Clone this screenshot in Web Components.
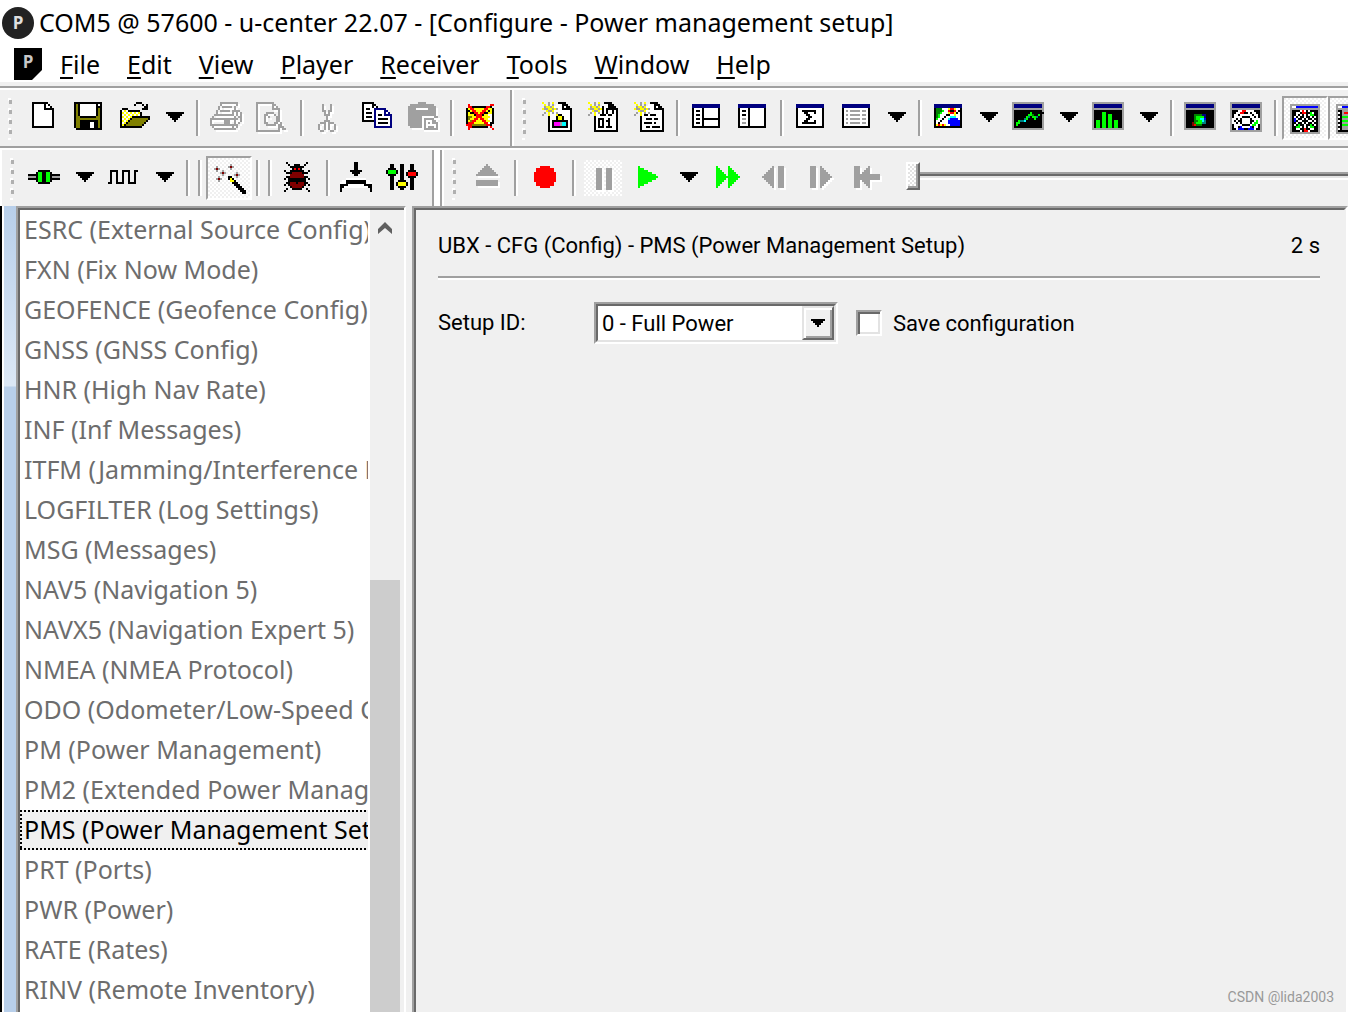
<!DOCTYPE html>
<html lang="en">
<head>
<meta charset="utf-8">
<title>u-center</title>
<style>
  html, body { margin: 0; height: 100%; overflow: hidden; background: #f0f0f0; }
</style>
</head>
<body>
<ucenter-app></ucenter-app>

<script>
const PALETTE = {
  K: '#000000', W: '#ffffff', G: '#a0a0a0', o: '#808000', y: '#ffff00', n: '#000080', R: '#ff0000',
  g: '#00ff00', d: '#008000', m: '#ff00ff', c: '#00ffff', b: '#0000ff', r: '#800000', t: '#008080'
};

// Toolbar bitmaps: one character per pixel, 16 columns by 15 rows.
const BITMAPS = {
  doc: `
...KKKKKKKK
...KWWWWWKWK
...KWWWWWKWWK
...KWWWWWKKKKK
...KWWWWWWWWWK
...KWWWWWWWWWK
...KWWWWWWWWWK
...KWWWWWWWWWK
...KWWWWWWWWWK
...KWWWWWWWWWK
...KWWWWWWWWWK
...KWWWWWWWWWK
...KKKKKKKKKKK`,
  save: `
.KKKKKKKKKKKKKK
.KoKWWWWWWWWKWK
.KoKWWWWWWWWKKK
.KoKWWWWWWWWKoK
.KoKWWWWWWWWKoK
.KoKWWWWWWWWKoK
.KoKWWWWWWWWKoK
.KooKKKKKKKKooK
.KooooooooooooK
.KooKKKKKKKKKoK
.KooKKKKKWWKKoK
.KooKKKKKWWKKoK
.KooKKKKKWWKKoK
..KKKKKKKKKKKKK`,
  open: `
.........KKK
........K...K.K
.............KK
..KKK.......KKK
.KWyWKKKKKK
.KyWyWyWyWyK
.KWyWyWyWyWK
.KyWyWyKKKKKKKKK
.KWyWyKooooooooK
.KyWyKooooooooK
.KWyKooooooooK
.KyKooooooooK
.KKKKKKKKKKK`,
  print: `
.....GGGGGGGGG
.....G.......G
....G.GGGGG.G
....G.......G
...G.GGGGG.GGGG
...G.......G.G.G
..GGGGGGGGGG.G.G
.G..........G.GG
GGGGGGGGGGGGGG.G
G......GGG..G..G
G......GGG..G.G
GGGGGGGGGGGGGG
.G.........G.G
..GGGGGGGGGGG`,
  preview: `
GGGGGGGGG
G.......GG
G.......G.G
G.......GGGG
G..........G
G....GGGG..G
G...GG...G.G
G...G.G...GG
G...G.....GG
G...G.....GG
G...GG...GG.G
G....GGGGG.GG
G..........GGG
G..........G.GG
GGGGGGGGGGGG..`,
  cut: `
.
....G...G
....G...G
....G...G
....GG.GG
.....G.G
.....GGG
......G
......G
.....GGG
...GGG.GGG
..G..G.G..G
..G..G.G..G
..G..G.G..G
...GG...GG`,
  copy: `
.KKKKKK
.KWWWWKK
.KWWWWKWK
.KWKKWWnnnnnn
.KWWWWWnWWWWnn
.KWKKKWnWWWWnWn
.KWWWWWnWKKWnnnn
.KWKKKWnWWWWWWWn
.KWWWWWnWKKKKKWn
.KKKKKKnWWWWWWWn
.......nWKKKKKWn
.......nWWWWWWWn
.......nnnnnnnnn`,
  paste: `
......GGGG
..GGGGGGGGGGGG
.GGGGGGGGGGGGGG
.GGGGWWWWWWGGGG
.GGGGGGGGGGGGGG
.GGGGGGGGGGGGGG
.GGGGGGGGGGGGGG
.GGGGGGGWWWWWWGG
.GGGGGGGWGGGGGW
.GGGGGGGWGWWWGGW
.GGGGGGGWGWGWGGG
.GGGGGGGWGWWWWWG
..GGGGGGWGWGGGWG
........WGGGGGGG`,
  erase: `
.
..R..........RR
..RRKKKKKKKRRK
.KyRRyyyyyRRyyK
.KKyRRyyyRRyKyK
.KyKKRRyRRKKyyK
.KyyyKRRRKyyWWK
.KooyyRRRyyyyWK
.KoyyRRyRRyyWWK
.KyoRRyyyRRyyWK
.KRRRyyyyyRRWKK
.RRRoooooooRRK
..RRKKKKKKKK.R
..R...........R`,
  newPacket: `
.y..G.y..KKKK
..y.G.G.WWWKKK
..GyyGyWWWWKWKK
.yGGyyGyGWWKKKKK
...yGGyWWWWWWWWK
..G.yWGWGWWWWWWK
.G..yWWWyKKWWWWK
....KWWWKyyKWWWK
....KWWWKyyKWWWK
....KWKKKKKKKKWK
....KWKmmmGccKWK
....KWKmmmGccKWK
....KWKKKKKKKKWK
....KWWWWWWWWWWK
....KKKKKKKKKKKK`,
  newBinary: `
.y..G.y..KKKK
..y.G.G.WWWKKK
..GyyGyWKWWKKKK
.yGGyyGyKWKKKKKK
...yGGyWKWKWWKWK
..G.yWGWKWKWWKWK
.G..yWWKKKWKKWWK
....KWWWWWWWWWWK
....KWKKKWWKWWWK
....KWKWKWKKWWWK
....KWKWKWWKWWWK
....KWKWKWWKWWWK
....KWKKKWKKKWWK
....KWWWWWWWWWWK
....KKKKKKKKKKKK`,
  newText: `
.y..G.y..KKKK
..y.G.G.WWWKKK
..GyyGyWWWWKWKK
.yGGyyGyGWWKKKKK
...yGGyWWWWWWWWK
..G.yWGWGWWWWWWK
.G..yWKKWKKKWWWK
....KWWWWWWWWWWK
....KWWKKKWKKWWK
....KWWWWWWWWWWK
....KWKKKKWKWWWK
....KWWWWWWWWWWK
....KWWKKWKKKKWK
....KWWWWWWWWWWK
....KKKKKKKKKKKK`,
  split: `
.
.nnnnnnnnnnnnnn
.nnnnnnnnnnnnnn
.KWWWWKWWWWWWWK
.KWKKWKWWWWWWWK
.KWWWWKWWWWWWWK
.KWKKWKWWWWWWWK
.KWWWWKWWWWWWWK
.KWKKWKKKKKKKKK
.KWWWWKWWWWWWWK
.KWKKWKWWWWWWWK
.KWWWWKWWWWWWWK
.KKKKKKKKKKKKKK`,
  side: `
.
.nnnnnnnnnnnnnn
.nnnnnnnnnnnnnn
.KWWWWKWWWWWWWK
.KWKKWKWWWWWWWK
.KWWWWKWWWWWWWK
.KWKKWKWWWWWWWK
.KWWWWKWWWWWWWK
.KWGGWKWWWWWWWK
.KWWWWKWWWWWWWK
.KWGGWKWWWWWWWK
.KWWWWKWWWWWWWK
.KKKKKKKKKKKKKK`,
  sigma: `
.
.nnnnnnnnnnnnnn
.nnnnnnnnnnnnnn
.KWWWWWWWWWWWWK
.KWWKKKKKKKWWWK
.KWWWKKWWWKWWWK
.KWWWWKKWWWWWWK
.KWWWWWKKWWWWWK
.KWWWWKKWWWWWWK
.KWWWKKWWWKWWWK
.KWWKKKKKKKWWWK
.KWWWWWWWWWWWWK
.KKKKKKKKKKKKKK`,
  list: `
.
.nnnnnnnnnnnnnn
.nnnnnnnnnnnnnn
.KWWWWWWWWWWWWK
.KWGWGGGGGWGGWK
.KWWWWWWWWWWWWK
.KWGWGGGGGWGGWK
.KWWWWWWWWWWWWK
.KWGWGGGGGWGGWK
.KWWWWWWWWWWWWK
.KWGWGGGGGWGGWK
.KWWWWWWWWWWWWK
.KKKKKKKKKKKKKK`,
  map: `
.
.nnnnnnnnnnnnnn
.nnnnnnnnnnnnnn
.KdddWWWyRRyWWK
.KdddgWWRKKRWKK
.KddgWWWyRRyKWK
.KdgWWWKKWWyWWK
.KdgWWKWWcccWWK
.KgWWKWWcbbbbWK
.KWWKWWWbbbbbbK
.KWKWWWWbbbbbbK
.KyRyRyWWbbbbbK
.KKKKKKKKKKKKKK`,
  chart: `
GGGGGGGGGGGGGGGG
GnnnnnnnnnnnnnnG
GnnnnnnnnnnnnnnG
GGGGGGGGGGGGGGGG
GKKKKKKKKKKKKKKG
GKKKKKKKKgKKKKKK
GKKKKKKKggdKKgKG
GKKKKKKgtKggtKKG
GKKKKKtgKKKgKKKG
GKKgttcKKKKKKKKG
GKggKKKKKKKKKKKG
GKgKKKKKKKKKKKKG
GKKKKKKKKKKKKKKG
GGGGGGGGGGGGGGGG`,
  bars: `
GGGGGGGGGGGGGGGG
GnnnnnnnnnnnnnnG
GnnnnnnnnnnnnnnG
GGGGGGGGGGGGGGGG
GKKKKKKKKKKKKKKG
GKKKKggKKKKKKKKG
GKKKKggKggKKKKKG
GKKKKggKggKKKKKG
GKKKKggKggKKKKKG
GKggKggKggKggKKG
GKggKggKggKggKKG
GKggKggKggKggKKG
GKggKggKggKggKKG
GGGGGGGGGGGGGGGG`,
  scatter: `
GGGGGGGGGGGGGGGG
GnnnnnnnnnnnnnnG
GnnnnnnnnnnnnnnG
GGGGGGGGGGGGGGGG
GKKKKKKKKKKKKKKG
GKKKKKKKKKKKKKKG
GKKKKddddnnKKKKG
GKKKKdggggnKKKKG
GKKKKdggccbKKKKG
GKKKKddggctKKKKG
GKKKrdgggttKKKKG
GKKKrRdddKKKKKKG
GKKKKKKKKKKKKKKG
GGGGGGGGGGGGGGGG`,
  sky: `
GGGGGGGGGGGGGGGG
GnnnnnnnnnnnnnnG
GnnnnnnnnnnnnnnG
GGGGGGGGGGGGGGGG
GKKKWWRRWWWWKKKG
GKKWWRRKKWKWWKKG
GKWWKWWWWWWKWWKG
GKWWWWKKKKWWKWKG
GWWKWKWWWWKWWWWG
GWKWKKWWWWKKWgWG
GWWKWKWWWWKWggWG
GKWWWWKKKKWggWKG
GKWWKbWWWWbKWWKG
GKKWbbbKKbbbWKKG
GGGGGGGGGGGGGGGG`,
  skyLive: `
GGGGGGGGGGGGGGG
GWWbbbbbbbbbbbG
GGGGGGGGGGGGGGG
GKKKKWRWKWKKKKG
GKKWWKRRKKgWKKG
GKKWKWKWKWggKKG
GKWKWKKWKKWKWKG
GKbWKKWKWKKWKKG
GKbKWWKKKWWKWKG
GKKWKKWKWKKWKKG
GKWKgKKWKKgKWKG
GKKggWKWKWggKKG
GKKWWKKRKKWWKKG
GKKKKWKRRWKKKKG
GGGGGGGGGGGGGGG`,
  tableLive: `
GGGGGGGGGGGGGGG
GWWbbbbbbbbbbbG
GGGGGGGGGGGGGGG
GKKGGGGGGGGGGKG
GWKGRRGRGGGGGWG
GKKGGGGGGGGGGKG
GWKgggGgggGggWG
GKKGGGGGGGGGGKG
GWKgggGgggGggWG
GKKGGGGGGGGGGKG
GWKgggGgggGggWG
GKKGGGGGGGGGGKG
GWKGGGGGGGGGGWG
GKKKKKKKKKKKKKG
GGGGGGGGGGGGGGG`,
  connect: `
.
.
.
.
.....KKKKKK
....KggKKggK
KKKKKggKKggKKKKK
GGGGKggKKggKGGGG
KKKKKggKKggKKKKK
....KggKKggK
.....KKKKKK`,
  wave: `
.
.
.
.
.KKKK..KKKK..KK
.K..K..K..K..K
.K..K..K..K..K
.K..K..K..K..K
.K..K..K..K..K
.K..K..K..K..K
KK..KKKK..KKKK`,
  wand: `
........G
.G.....GrG
GrG.....G
.G..G
...GrG.....G
....G.....GrG
..G....KK..G
.GrG...KyK
..G.....yyK
.........KKK
..........KKK
...........KKK
............KKK
.............KKK
..............KK`,
  bug: `
..K.........K
...K..KKK..K
....KKKKKKK
.....KRKRK
.K..KKKKKKK..K
..KKKrrrrrKKK
....rrrrrrr
..KKrrrrrrrKK
.K.KKKKKKKKK.K
...KKKKKKKKK
..KKrrrKrrrKK
.K.KrrrrrrrK.K
....KrrrrrK
..K..KKKKK..K
.K...........K`,
  receive: `
.......KK
.......KK
.......KK
.......KK
.....KKKKKK
......KKKK
.......KK
.
...WWWWWWWWWW
.WWKKKKKKKKKKWW
WWWKKKKKKKKKKWWW
KKKKWWWWWWWWKKKK
KKWWWWWWWWWWWWKK
K..............K
K..............K`,
  sliders: `
.
..KK...KK...KK
..KK...KK...KK
.KKKK..KK...KK
KggggK.KK..KKKK
KggggK.KK.KRRRRK
.KKKK..KK.KRRRRK
..KK...KK..KKKK
..KK...KK...KK
..KK..KKKK..KK
..KK.KyyyyK.KK
..KK.KyyyyK.KK
..KK..KKKK..KK
..KK...KK...KK`,
  eject: `
.
........G
.......GGG
......GGGGG
.....GGGGGGG
....GGGGGGGGG
...GGGGGGGGGGG
.
.
...GGGGGGGGGGG
...GGGGGGGGGGG
...GGGGGGGGGGG`,
  record: `
.
.
......RRRRR
....RRRRRRRRR
....RRRRRRRRR
...RRRRRRRRRRR
...RRRRRRRRRRR
...RRRRRRRRRRR
...RRRRRRRRRRR
...RRRRRRRRRRR
....RRRRRRRRR
....RRRRRRRRR
......RRRRR`,
  pause: `
.
.
.
.....GGG..GGG
.....GGG..GGG
.....GGG..GGG
.....GGG..GGG
.....GGG..GGG
.....GGG..GGG
.....GGG..GGG
.....GGG..GGG
.....GGG..GGG
.....GGG..GGG
.....GGG..GGG`,
  play: `
.
.
...g
...ggg
...ggggg
...ggggggg
...ggggggggg
...gggggggggg
...ggggggggg
...ggggggg
...ggggg
...ggg
...g`,
  forward: `
.
.
..g.....g
..gg....gg
..ggg...ggg
..gggg..gggg
..ggggg.ggggg
..gggggggggggg
..ggggg.ggggg
..gggg..gggg
..ggg...ggg
..gg....gg
..g.....g`,
  stepBack: `
.
.
.......G..GGG
......GG..GGG
.....GGG..GGG
....GGGG..GGG
...GGGGG..GGG
..GGGGGG..GGG
...GGGGG..GGG
....GGGG..GGG
.....GGG..GGG
......GG..GGG
.......G..GGG`,
  stepForward: `
.
.
...GGG..G
...GGG..GG
...GGG..GGG
...GGG..GGGG
...GGG..GGGGG
...GGG..GGGGGG
...GGG..GGGGG
...GGG..GGGG
...GGG..GGG
...GGG..GG
...GGG..G`,
  rewind: `
.
.
..GGG....G
..GGG...GG
..GGG..GGG
..GGG.GGGG
..GGGGGGGGGGGGG
..GGGGGGGGGGGGG
..GGGGGGGGGGGGG
..GGG.GGGG
..GGG..GGG
..GGG...GG
..GGG....G`
};

function bitmapPaths(name, shift, forced) {
  const runs = {};
  BITMAPS[name].slice(1).split('\n').forEach((line, y) => {
    for (const m of line.matchAll(/([A-Za-z])\1*/g)) {
      const colour = forced || PALETTE[m[1]];
      (runs[colour] ||= []).push(`M${m.index + shift} ${y + shift}h${m[0].length}v1h-${m[0].length}z`);
    }
  });
  return Object.entries(runs).map(([c, d]) => `<path fill="${c}" d="${d.join('')}"/>`).join('');
}

function define(tag, html, setup) {
  const template = document.createElement('template');
  template.innerHTML = html;
  customElements.define(tag, class extends HTMLElement {
    constructor() {
      super();
      this.attachShadow({ mode: 'open' }).append(template.content.cloneNode(true));
    }
    connectedCallback() { if (setup) setup(this, this.shadowRoot); }
  });
}

define('pixel-icon', `
<style>
  :host { display: block; flex: none; width: 32px; height: 30px; }
  svg { display: block; overflow: visible; }
</style>
<svg width="32" height="30" viewBox="0 0 16 15" shape-rendering="crispEdges" aria-hidden="true"></svg>`,
(host, root) => {
  const name = host.getAttribute('name');
  root.querySelector('svg').innerHTML =
    (host.hasAttribute('embossed') ? bitmapPaths(name, 1, '#ffffff') : '') + bitmapPaths(name, 0);
});

define('tool-button', `
<style>
  :host { display: block; flex: none; }
  button { display: flex; align-items: flex-start; box-sizing: border-box; width: 46px; height: 44px; margin: 0; padding: 4px; border: 2px solid transparent; border-radius: 0; background: none; }
  :host([pressed]) button { border-color: #a0a0a0 #fff #fff #a0a0a0; padding: 6px 2px 2px 6px;
    background: repeating-conic-gradient(#fff 0 25%, #f0f0f0 0 50%) 0 0 / 4px 4px padding-box; }
  :host([held]) button { border-width: 4px; padding: 2px;
    background: repeating-conic-gradient(#fff 0 25%, #f0f0f0 0 50%) 0 0 / 4px 4px padding-box; }
</style>
<button type="button"></button>`,
(host, root) => {
  const button = root.querySelector('button');
  const icon = document.createElement('pixel-icon');
  icon.setAttribute('name', host.getAttribute('icon'));
  button.disabled = host.hasAttribute('disabled');
  icon.toggleAttribute('embossed', button.disabled);
  button.setAttribute('aria-label', host.getAttribute('label') || host.getAttribute('icon'));
  button.replaceChildren(icon);
});

define('drop-arrow', `
<style>
  :host { display: block; flex: none; }
  button { display: flex; align-items: flex-start; box-sizing: border-box; width: 34px; height: 44px; margin: 0; padding: 16px 8px 0; border: 0; background: none; }
  svg { display: block; }
</style>
<button type="button" aria-label="More"><svg width="18" height="10" viewBox="0 0 9 5" shape-rendering="crispEdges"><path d="M0 0h9v1h-1v1h-1v1h-1v1h-1v1h-1v-1h-1v-1h-1v-1h-1v-1h-1z"/></svg></button>`);

define('tool-gap', `
<style>
  :host { display: flex; flex: none; width: 12px; height: 44px; justify-content: center; align-items: center; }
  i { width: 2px; height: 36px; background: #a0a0a0; border-right: 2px solid #fff; }
</style>
<i></i>`);

define('tool-band', `
<style>
  :host { display: flex; flex: none; align-items: center; }
  :host([grow]) { flex: 1; min-width: 0; }
  .grip { flex: none; width: 20px; height: 44px; }
  .grip svg { display: block; margin: 2px 0 0 8px; }
</style>
<div class="grip"><svg width="4" height="42" shape-rendering="crispEdges" aria-hidden="true">
  <g fill="#fff"><path d="M0 0h3v3h-3zM0 10h3v3h-3zM0 20h3v3h-3zM0 30h3v3h-3zM0 40h3v2h-3z"/></g>
  <g fill="#b0b0b0"><path d="M1 2h3v4h-3zM1 12h3v4h-3zM1 22h3v4h-3zM1 32h3v4h-3z"/></g>
</svg></div>
<slot></slot>`);

define('tool-row', `
<style>
  :host { display: flex; flex: none; height: 56px; overflow: hidden; border-top: 2px solid #fff; border-bottom: 2px solid #a0a0a0; background: #f0f0f0; }
  ::slotted(hr) { flex: none; width: 2px; height: 100%; margin: 0 0 0 6px; border: 0; border-right: 2px solid #fff; background: #a0a0a0; }
  ::slotted(hr.wide) { width: 6px; border: 0; border-left: 2px solid #a0a0a0; background: #fff; }
  ::slotted(hr.next) { margin: 0; }
  :host([inset]) { box-shadow: inset 2px 0 #fff; padding-left: 2px; }
</style>
<slot></slot>`);

define('seek-slider', `
<style>
  :host { display: block; flex: 1; min-width: 100px; padding: 0 0 4px 16px; }
  input { display: block; width: 100%; height: 28px; margin: 0; appearance: none; background: none; }
  input::-webkit-slider-runnable-track { height: 8px;
    background: linear-gradient(#a0a0a0 0 2px, #696969 2px 4px, #e3e3e3 4px 6px, #fff 6px); }
  input::-webkit-slider-thumb { appearance: none; box-sizing: border-box; width: 14px; height: 28px; margin-top: -10px;
    border: 2px solid; border-color: #fff #696969 #696969 #fff; box-shadow: inset -2px -2px #a0a0a0;
    background: repeating-conic-gradient(#fff 0 25%, #e3e3e3 0 50%) 0 0 / 4px 4px padding-box; }
</style>
<input type="range" min="0" max="100" value="0" aria-label="Playback position">`);

define('app-badge', `
<style>
  :host { display: flex; flex: none; align-items: center; justify-content: center; width: 32px; height: 32px; border-radius: 16px;
    background: #222; color: #e0e0e0; font: bold 17px/32px "Open Sans", sans-serif; }
  :host([square]) { width: 28px; border-radius: 0; background: #000; color: #c8c8c8; clip-path: polygon(0 0, 28px 0, 28px 22px, 18px 32px, 0 32px); line-height: 28px; align-items: flex-start; }
</style>
<slot></slot>`);

define('title-bar', `
<style>
  :host { display: flex; flex: none; align-items: center; gap: 5px; height: 46px; padding-left: 2px; background: #fff; color: #000; font: 25px/44px "Noto Sans", sans-serif; }
  h1 { margin: 0; height: 46px; font: inherit; white-space: nowrap; }
</style>
<app-badge>P</app-badge><h1><slot></slot></h1>`);

define('menu-entry', `
<style>
  button { display: block; margin: 0; padding: 0; border: 0; background: none; color: #000; font: inherit; }
  u { text-decoration-thickness: 2px; text-underline-offset: 3px; }
</style>
<button type="button"><u></u><span></span></button>`,
(host, root) => {
  const label = host.getAttribute('label');
  root.querySelector('u').textContent = label[0];
  root.querySelector('span').textContent = label.slice(1);
});

define('menu-bar', `
<style>
  :host { display: block; flex: none; background: #fff; border-bottom: 2px solid #a0a0a0; }
  nav { display: flex; align-items: center; gap: 27px; height: 36px; padding: 0 14px; border-bottom: 4px solid #f0f0f0; font: 25px/36px "Noto Sans", sans-serif; }
  app-badge { margin-right: -9px; }
</style>
<nav><app-badge square>P</app-badge><slot></slot></nav>`);

define('message-item', `
<style>
  :host { display: block; height: 40px; padding-left: 4px; overflow: hidden; white-space: nowrap; color: #6d6d6d; }
  :host([aria-selected="true"]) { color: #000;
    background:
      repeating-linear-gradient(90deg, #000 0 2px, #f0f0f0 2px 4px) 0 0 / 100% 2px no-repeat,
      repeating-linear-gradient(90deg, #000 0 2px, #f0f0f0 2px 4px) 0 100% / 100% 2px no-repeat,
      repeating-linear-gradient(#000 0 2px, #f0f0f0 2px 4px) 0 0 / 2px 100% no-repeat,
      #f0f0f0; }
</style>
<slot></slot>`);

define('message-list', `
<style>
  :host { display: flex; flex: none; min-height: 0; box-sizing: border-box; border: 2px solid #a0a0a0; border-right-color: #fff; border-bottom: 0; background: #f0f0f0; }
  .well { display: flex; flex: 1; min-width: 0; border-top: 2px solid #696969; border-left: 2px solid #696969; background: #fff; }
  .rows { flex: 1; min-width: 0; overflow: hidden; margin-right: 2px; font: 25px/38px "Noto Sans", sans-serif; }
  .bar { display: flex; flex-direction: column; flex: none; width: 30px; padding-right: 4px; background: #f0f0f0; }
  .bar svg { flex: none; display: block; margin: 12px 0 0 7px; }
  .thumb { flex: 1; margin-top: 346px; background: #cdcdcd; }
</style>
<div class="well">
  <div class="rows" role="listbox" aria-label="Messages"><slot></slot></div>
  <div class="bar">
    <svg width="16" height="12" viewBox="0 0 16 12" aria-hidden="true"><path d="M1 12v-5l7-7 7 7v5l-7-6z" fill="#606060"/></svg>
    <div class="thumb"></div>
  </div>
</div>`);

define('classic-select', `
<style>
  :host { display: block; box-sizing: border-box; width: 244px; border: 2px solid; border-color: #a0a0a0 #fff #fff #a0a0a0; }
  .box { display: grid; height: 34px; border: 2px solid; border-color: #696969 #e3e3e3 #e3e3e3 #696969; background: #fff; }
  select, .drop { grid-area: 1 / 1; }
  select { appearance: none; width: 100%; height: 34px; margin: 0; padding: 2px 36px 0 4px; border: 0; border-radius: 0; background: none; color: #000; font: inherit; outline: 0; }
  .drop { display: flex; align-items: center; justify-content: center; justify-self: end; box-sizing: border-box; width: 32px; height: 34px; pointer-events: none;
    background: #f0f0f0; border: 2px solid; border-color: #e3e3e3 #696969 #696969 #e3e3e3; box-shadow: inset 2px 2px #fff, inset -2px -2px #a0a0a0; }
</style>
<div class="box">
  <select aria-label="Setup ID">
    <option>0 - Full Power</option><option>1 - Balanced</option><option>2 - Interval</option>
  </select>
  <span class="drop"><svg width="14" height="8" viewBox="0 0 7 4" shape-rendering="crispEdges"><path d="M0 0h7v1h-1v1h-1v1h-1v1h-1v-1h-1v-1h-1v-1h-1z"/></svg></span>
</div>`);

define('classic-check', `
<style>
  label { display: flex; align-items: center; gap: 11px; white-space: nowrap; }
  span { padding-top: 2px; }
  input { appearance: none; flex: none; box-sizing: border-box; width: 26px; height: 26px; margin: 0; border: 2px solid; border-color: #a0a0a0 #fff #fff #a0a0a0; background: #fff;
    box-shadow: inset 2px 2px #696969, inset -2px -2px #e3e3e3; }
</style>
<label><input type="checkbox"><span><slot></slot></span></label>`);

define('config-panel', `
<style>
  :host { display: block; flex: 1; min-width: 0; border: 2px solid #a0a0a0; border-right-color: #fff; border-bottom: 0; background: #f0f0f0; color: #000; font: 22px/28px Roboto, "Liberation Sans", sans-serif; }
  .well { position: relative; box-sizing: border-box; height: 100%; padding: 22px 24px 0 22px; border: 2px solid #696969; border-right-color: #f0f0f0; border-bottom: 0; }
  header { display: flex; justify-content: space-between; padding-bottom: 16px; border-bottom: 2px solid #a0a0a0; box-shadow: 0 2px #fff; white-space: nowrap; }
  h2 { margin: 0; font: inherit; }
  .line { display: flex; align-items: center; margin-top: 24px; }
  .name { width: 156px; }
  classic-check { margin-left: 18px; }
  small { position: absolute; right: 10px; bottom: 6px; color: #999; font: 14px/18px Roboto, "Liberation Sans", sans-serif; }
</style>
<div class="well">
  <header><h2>UBX - CFG (Config) - PMS (Power Management Setup)</h2><span>2 s</span></header>
  <div class="line"><span class="name">Setup ID:</span><classic-select></classic-select><classic-check>Save configuration</classic-check></div>
  <small>CSDN @lida2003</small>
</div>`);

define('ucenter-app', `
<style>
  :host { display: flex; flex-direction: column; height: 100vh; background: #f0f0f0; }
  tool-row.last { border-bottom: 0; }
  main { display: flex; flex: 1; min-height: 0; }
  .edge { flex: none; box-sizing: border-box; width: 16px; border-left: 2px solid #000; box-shadow: inset 2px 0 #fff;
    background: linear-gradient(#b8cfea, #dbe7f5 176px, #dbe7f5 180px, #b8cfea 181px); }
  message-list { width: 390px; }
  config-panel { margin-left: 6px; }
</style>
<title-bar>COM5 @ 57600 - u-center 22.07 - [Configure - Power management setup]</title-bar>
<menu-bar>
  <menu-entry label="File"></menu-entry><menu-entry label="Edit"></menu-entry><menu-entry label="View"></menu-entry>
  <menu-entry label="Player"></menu-entry><menu-entry label="Receiver"></menu-entry><menu-entry label="Tools"></menu-entry>
  <menu-entry label="Window"></menu-entry><menu-entry label="Help"></menu-entry>
</menu-bar>
<tool-row>
  <tool-band>
    <tool-button icon="doc" label="New"></tool-button><tool-button icon="save" label="Save"></tool-button><tool-button icon="open" label="Open"></tool-button><drop-arrow></drop-arrow>
    <tool-gap></tool-gap>
    <tool-button icon="print" disabled></tool-button><tool-button icon="preview" disabled></tool-button>
    <tool-gap></tool-gap>
    <tool-button icon="cut" disabled></tool-button><tool-button icon="copy"></tool-button><tool-button icon="paste" disabled></tool-button>
    <tool-gap></tool-gap>
    <tool-button icon="erase"></tool-button>
  </tool-band>
  <hr>
  <tool-band>
    <tool-button icon="newPacket"></tool-button><tool-button icon="newBinary"></tool-button><tool-button icon="newText"></tool-button>
    <tool-gap></tool-gap>
    <tool-button icon="split"></tool-button><tool-button icon="side"></tool-button>
    <tool-gap></tool-gap>
    <tool-button icon="sigma"></tool-button><tool-button icon="list"></tool-button><drop-arrow></drop-arrow>
    <tool-gap></tool-gap>
    <tool-button icon="map"></tool-button><drop-arrow></drop-arrow><tool-button icon="chart"></tool-button><drop-arrow></drop-arrow><tool-button icon="bars"></tool-button><drop-arrow></drop-arrow>
    <tool-gap></tool-gap>
    <tool-button icon="scatter"></tool-button><tool-button icon="sky"></tool-button>
    <tool-gap></tool-gap>
    <tool-button icon="skyLive" pressed></tool-button><tool-button icon="tableLive" pressed></tool-button>
  </tool-band>
</tool-row>
<tool-row class="last" inset>
  <tool-band>
    <tool-button icon="connect"></tool-button><drop-arrow></drop-arrow><tool-button icon="wave"></tool-button><drop-arrow></drop-arrow>
    <tool-gap></tool-gap><tool-gap></tool-gap>
    <tool-button icon="wand" pressed></tool-button>
    <tool-gap></tool-gap><tool-gap></tool-gap>
    <tool-button icon="bug"></tool-button>
    <tool-gap></tool-gap>
    <tool-button icon="receive"></tool-button><tool-button icon="sliders"></tool-button>
  </tool-band>
  <hr class="wide"><hr class="next">
  <tool-band grow>
    <tool-button icon="eject" disabled></tool-button>
    <tool-gap></tool-gap>
    <tool-button icon="record"></tool-button>
    <tool-gap></tool-gap>
    <tool-button icon="pause" disabled held></tool-button><tool-button icon="play"></tool-button><drop-arrow></drop-arrow><tool-button icon="forward"></tool-button>
    <tool-button icon="stepBack" disabled></tool-button><tool-button icon="stepForward" disabled></tool-button><tool-button icon="rewind" disabled></tool-button>
    <seek-slider></seek-slider>
  </tool-band>
</tool-row>
<main>
  <div class="edge"></div>
  <message-list></message-list>
  <config-panel></config-panel>
</main>`,
(host, root) => {
  const names = ['ESRC (External Source Config)', 'FXN (Fix Now Mode)', 'GEOFENCE (Geofence Config)', 'GNSS (GNSS Config)',
    'HNR (High Nav Rate)', 'INF (Inf Messages)', 'ITFM (Jamming/Interference Monitor)', 'LOGFILTER (Log Settings)',
    'MSG (Messages)', 'NAV5 (Navigation 5)', 'NAVX5 (Navigation Expert 5)', 'NMEA (NMEA Protocol)',
    'ODO (Odometer/Low-Speed COG filter)', 'PM (Power Management)', 'PM2 (Extended Power Management)',
    'PMS (Power Management Setup)', 'PRT (Ports)', 'PWR (Power)', 'RATE (Rates)', 'RINV (Remote Inventory)'];
  root.querySelector('message-list').append(...names.map(name => {
    const item = document.createElement('message-item');
    item.textContent = name;
    item.setAttribute('role', 'option');
    item.setAttribute('aria-selected', String(name.startsWith('PMS')));
    return item;
  }));
});
</script>
</body>
</html>
